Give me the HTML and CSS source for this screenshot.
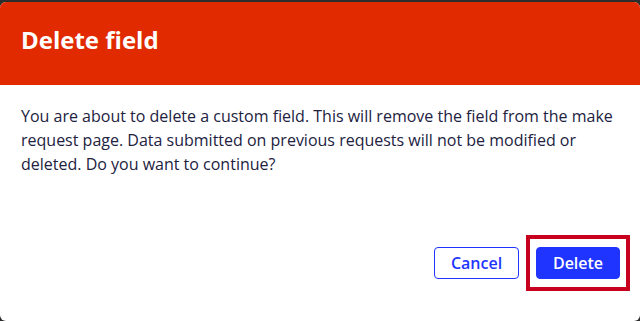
FILE: index.html
```html
<!DOCTYPE html>
<html lang="en">
<head>
<meta charset="utf-8">
<title>Delete field</title>
<link rel="stylesheet" href="styles.css">
</head>
<body>
<div class="dialog">
  <div class="dialog-header">
    <h1 class="dialog-title">Delete field</h1>
  </div>
  <div class="dialog-body">
    <p class="dialog-text">You are about to delete a custom field. This will remove the field from the make request page. Data submitted on previous requests will not be modified or deleted. Do you want to continue?</p>
  </div>
  <div class="dialog-footer">
    <button class="btn btn-secondary" type="button">Cancel</button>
    <button class="btn btn-primary highlighted" type="button">Delete</button>
  </div>
</div>
</body>
</html>
```
FILE: styles.css
```css
html, body {
  margin: 0;
  padding: 0;
}
body {
  background: #2d2d2d;
  width: 640px;
  height: 321px;
  overflow: hidden;
  font-family: "Open Sans", "Noto Sans", sans-serif;
}
.dialog {
  margin-top: 2px;
  width: 640px;
  height: 319px;
  background: #ffffff;
  border-radius: 6px;
  overflow: hidden;
  display: flex;
  flex-direction: column;
  box-sizing: border-box;
}
.dialog-header {
  background: #e12a00;
  height: 83px;
  box-sizing: border-box;
  padding: 20px 21px 0;
}
.dialog-title {
  margin: 0;
  color: #ffffff;
  font-size: 24px;
  font-weight: 700;
  line-height: 36px;
}
.dialog-body {
  padding: 19px 21px 0;
}
.dialog-text {
  margin: 0;
  color: #22223f;
  font-size: 16px;
  line-height: 24px;
}
.dialog-footer {
  display: flex;
  justify-content: flex-end;
  gap: 17px;
  padding: 71px 20px 0;
}
.btn {
  font-family: "Open Sans", "Noto Sans", sans-serif;
  font-size: 16px;
  font-weight: 600;
  height: 32px;
  padding: 0 16px;
  border-radius: 4px;
  border: 1px solid #1f35ff;
  cursor: pointer;
  line-height: 30px;
}
.btn-secondary {
  background: #ffffff;
  color: #1f35ff;
  width: 85px;
  padding: 0;
}
.btn-primary {
  background: #1f35ff;
  color: #ffffff;
  width: 84px;
  padding: 0;
}
.highlighted {
  position: relative;
}
.highlighted::after {
  content: "";
  position: absolute;
  top: -13px;
  bottom: -13px;
  left: -11px;
  right: -11px;
  border: 4px solid #c8001f;
  pointer-events: none;
}
```
